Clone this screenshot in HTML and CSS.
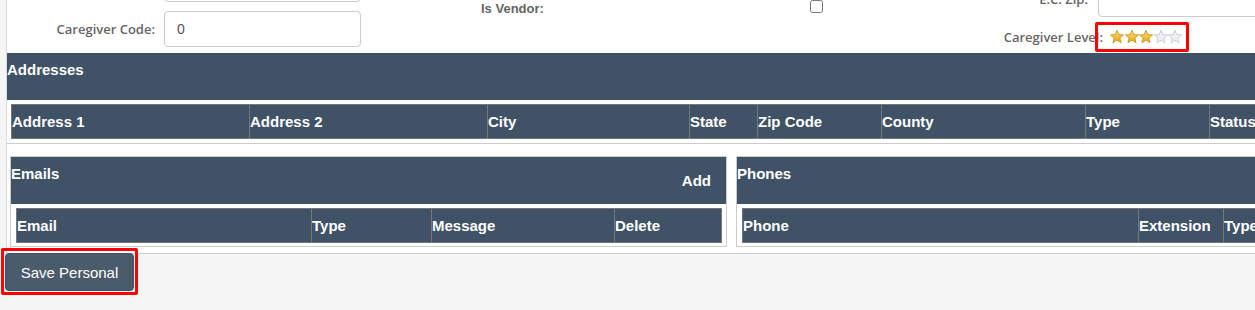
FILE: index.html
```html
<!DOCTYPE html>
<html lang="en">
<head>
    <meta charset="UTF-8">
    <title>Caregiver Personal</title>
    <link rel="stylesheet" href="styles.css">
</head>
<body>
    <div class="page">
        <div class="form">
            <div class="col col-1">
                <div class="field first">
                    <label class="lbl"></label>
                    <input class="txt" type="text">
                </div>
                <div class="field second">
                    <label class="lbl">Caregiver Code:</label>
                    <input class="txt" type="text" value="0">
                </div>
            </div>
            <div class="col col-2">
                <div class="field vendor">
                    <label class="lbl-bold">Is Vendor:</label>
                    <input class="chk" type="checkbox">
                </div>
            </div>
            <div class="col col-3">
                <div class="field zip">
                    <label class="lbl">E.C. Zip:</label>
                    <input class="txt wide" type="text">
                </div>
                <div class="field level">
                    <label class="lbl">Caregiver Level:</label>
                    <span class="mark stars">
                        <svg class="star" viewBox="0 0 14 14">
                            <defs>
                                <linearGradient id="gold" x1="0" y1="0" x2="0" y2="1">
                                    <stop offset="0" stop-color="#fde47c"/>
                                    <stop offset="1" stop-color="#e8a20a"/>
                                </linearGradient>
                            </defs>
                            <polygon class="on" points="7,0.3 8.8,4.6 13.6,4.9 9.9,8 11.1,12.8 7,10.1 2.9,12.8 4.1,8 0.4,4.9 5.2,4.6"/>
                        </svg>
                        <svg class="star" viewBox="0 0 14 14"><polygon class="on" points="7,0.3 8.8,4.6 13.6,4.9 9.9,8 11.1,12.8 7,10.1 2.9,12.8 4.1,8 0.4,4.9 5.2,4.6"/></svg>
                        <svg class="star" viewBox="0 0 14 14"><polygon class="on" points="7,0.3 8.8,4.6 13.6,4.9 9.9,8 11.1,12.8 7,10.1 2.9,12.8 4.1,8 0.4,4.9 5.2,4.6"/></svg>
                        <svg class="star" viewBox="0 0 14 14"><polygon class="off" points="7,0.3 8.8,4.6 13.6,4.9 9.9,8 11.1,12.8 7,10.1 2.9,12.8 4.1,8 0.4,4.9 5.2,4.6"/></svg>
                        <svg class="star" viewBox="0 0 14 14"><polygon class="off" points="7,0.3 8.8,4.6 13.6,4.9 9.9,8 11.1,12.8 7,10.1 2.9,12.8 4.1,8 0.4,4.9 5.2,4.6"/></svg>
                    </span>
                </div>
            </div>
        </div>

        <div class="panel addresses">
            <div class="panel-head">
                <span class="panel-title">Addresses</span>
            </div>
            <table class="grid addr-grid">
                <colgroup>
                    <col style="width:238px"><col style="width:238px"><col style="width:202px"><col style="width:68px">
                    <col style="width:124px"><col style="width:204px"><col style="width:124px"><col style="width:80px">
                </colgroup>
                <tr>
                    <th>Address 1</th>
                    <th>Address 2</th>
                    <th>City</th>
                    <th>State</th>
                    <th>Zip Code</th>
                    <th>County</th>
                    <th>Type</th>
                    <th>Status</th>
                </tr>
            </table>
        </div>

        <div class="contacts">
            <div class="panel box emails">
                <div class="panel-head">
                    <span class="panel-title">Emails</span>
                    <span class="panel-add">Add</span>
                </div>
                <table class="grid">
                    <colgroup>
                        <col style="width:295px"><col style="width:120px"><col style="width:183px"><col style="width:107px">
                    </colgroup>
                    <tr>
                        <th>Email</th>
                        <th>Type</th>
                        <th>Message</th>
                        <th>Delete</th>
                    </tr>
                </table>
            </div>
            <div class="panel box phones">
                <div class="panel-head">
                    <span class="panel-title">Phones</span>
                </div>
                <table class="grid phone-grid">
                    <colgroup>
                        <col style="width:396px"><col style="width:85px"><col style="width:80px">
                    </colgroup>
                    <tr>
                        <th>Phone</th>
                        <th>Extension</th>
                        <th>Type</th>
                    </tr>
                </table>
            </div>
        </div>
    </div>

    <div class="mark save-mark">
        <button class="btn-save">Save Personal</button>
    </div>
</body>
</html>
```
FILE: styles.css
```css
body {
    margin: 0;
    background-color: #f5f5f5;
    font-family: "Liberation Sans", Arial, sans-serif;
    overflow: hidden;
}
.page {
    margin-left: 6px;
    width: 1320px;
    background: #fff;
    border-left: 1px solid #ddd;
    border-bottom: 1px solid #ccc;
    padding-bottom: 6px;
}

/* top form */
.form {
    display: flex;
    height: 53px;
    overflow: hidden;
}
.col {
    flex-shrink: 0;
}
.col-1 {
    width: 413px;
}
.col-2 {
    width: 420px;
    padding-left: 61px;
    box-sizing: border-box;
}
.col-3 {
    flex: 1 0 auto;
}
.field {
    display: flex;
    align-items: center;
}
.lbl {
    font-family: "Open Sans", sans-serif;
    font-weight: 600;
    font-size: 13px;
    color: #666;
    text-align: right;
    flex-shrink: 0;
}
.lbl-bold {
    font-weight: bold;
    font-size: 13px;
    color: #666;
    width: 329px;
    line-height: 18px;
    flex-shrink: 0;
}
.txt {
    height: 36px;
    box-sizing: border-box;
    border: 1px solid #ccc;
    border-radius: 4px;
    padding: 0 12px;
    font-family: "Liberation Sans", Arial, sans-serif;
    font-size: 14px;
    color: #555;
    flex-shrink: 0;
}
.col-1 .lbl {
    width: 148px;
    margin-right: 9px;
}
.col-1 .txt {
    width: 197px;
}
.first {
    margin-top: -34px;
}
.second {
    margin-top: 9px;
}
.vendor {
    align-items: flex-start;
}
.chk {
    margin: 0;
    width: 13px;
    height: 13px;
}
.zip {
    margin-top: -19px;
}
.zip .lbl {
    width: 248px;
    margin-right: 10px;
}
.wide {
    width: 300px;
}
.level {
    margin-top: 5px;
    height: 30px;
}
.level .lbl {
    width: 263px;
}

/* red highlight boxes */
.mark {
    border: 3px solid #f00;
    border-radius: 2px;
}
.stars {
    display: inline-flex;
    gap: 0.5px;
    margin-left: -8px;
    padding: 5px 4px 5px 12px;
}
.star {
    width: 14px;
    height: 14px;
}
.star .on {
    fill: url(#gold);
    stroke: #c4921a;
    stroke-width: 0.8;
}
.star .off {
    fill: #eef0f4;
    stroke: #bfc5cf;
    stroke-width: 0.8;
}

/* panels */
.panel-head {
    background: #3f5266;
    height: 47px;
    box-sizing: border-box;
    padding-top: 8px;
    display: flex;
    justify-content: space-between;
}
.panel-title, .panel-add {
    color: #fff;
    font-weight: bold;
    font-size: 15px;
    line-height: 18px;
}
.panel-add {
    margin-top: 7px;
    margin-right: 15px;
}
.addresses {
    border-bottom: 1px solid #ccc;
}
.addresses .grid {
    margin: 4px 0 4px 4px;
}
.grid {
    border-collapse: collapse;
    table-layout: fixed;
}
.grid th {
    background: #3f5266;
    color: #fff;
    border: 1px solid #777;
    height: 33px;
    padding: 0;
    text-align: left;
    font-size: 15px;
    font-weight: bold;
    white-space: nowrap;
    overflow: hidden;
}
.contacts {
    display: flex;
    gap: 9px;
    margin: 12px 0 0 3px;
}
.box {
    border: 1px solid #ccc;
}
.emails {
    width: 715px;
}
.phones {
    flex: 1;
}
.box .grid {
    margin: 4px 4px 3px 5px;
}

/* save */
.save-mark {
    display: inline-block;
    margin: -6px 0 0 1px;
    padding: 2px 1px 1px 1px;
}
.btn-save {
    display: block;
    width: 129px;
    height: 38px;
    background: #4a5b6c;
    color: #fff;
    border: 1px solid #3f4f60;
    border-radius: 4px;
    font-family: "Liberation Sans", Arial, sans-serif;
    font-size: 15px;
}
```
